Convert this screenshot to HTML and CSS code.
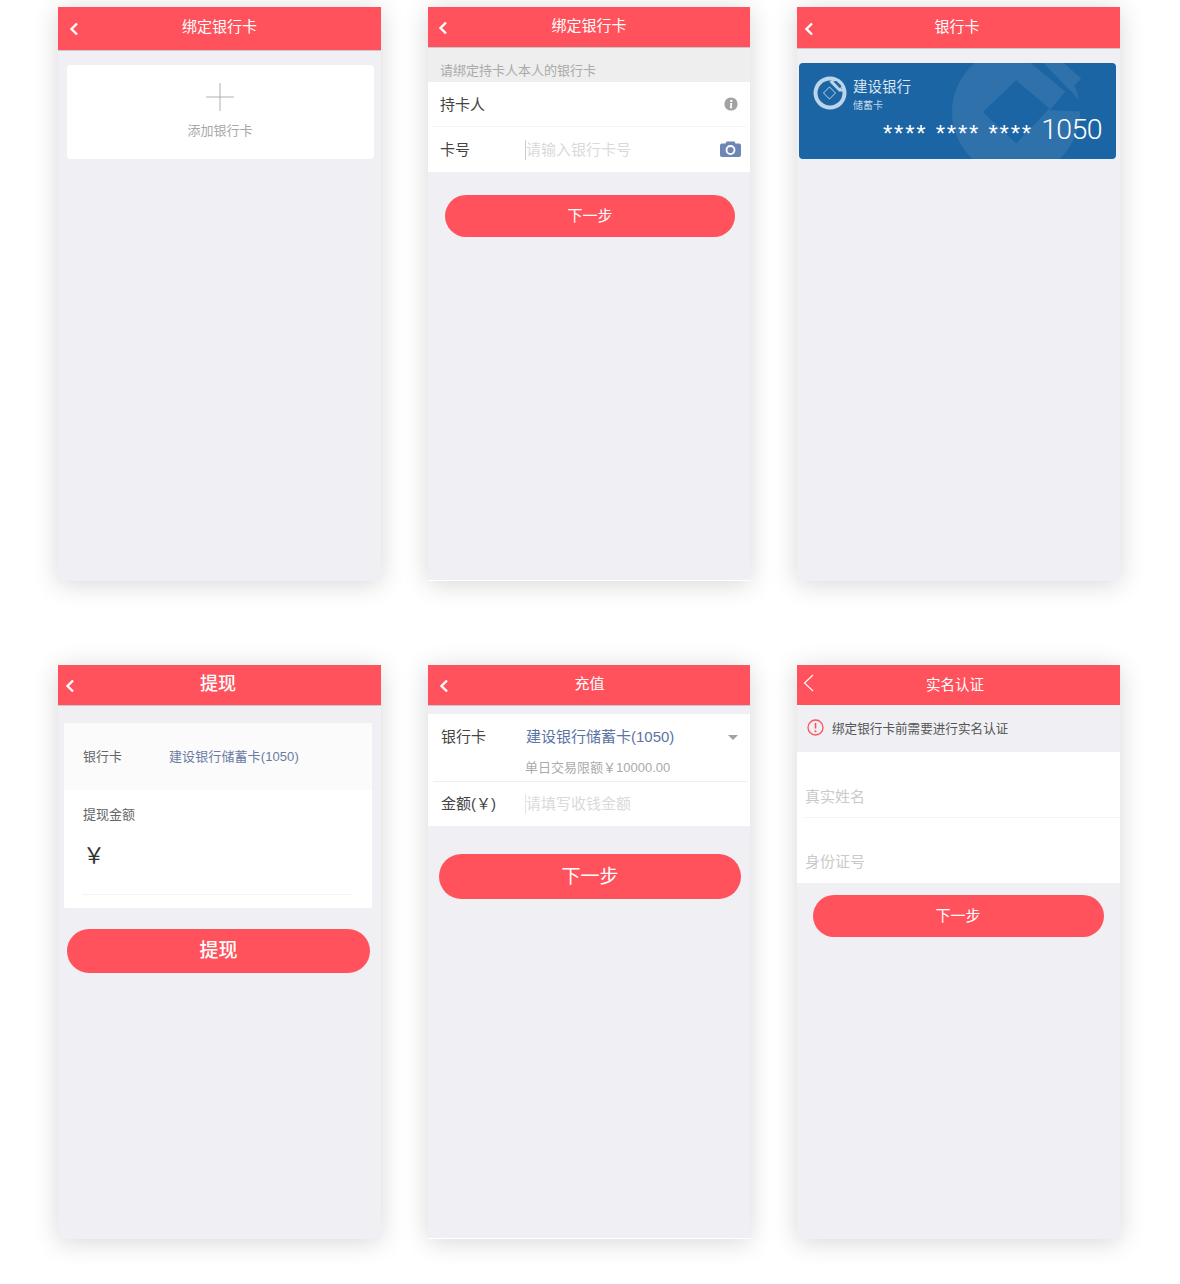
FILE: index.html
```html
<!DOCTYPE html>
<html lang="zh-CN">
<head>
<meta charset="utf-8">
<title>银行卡</title>
<link rel="stylesheet" href="styles.css">
</head>
<body>
<main class="sheet">

<section class="phone">
  <header class="bar bar-43"><svg class="back" viewBox="0 0 10 14"><path d="M8 1.500 2.500 7 8 12.500"/></svg><h1 class="title">绑定银行卡</h1></header>
  <div class="add-card">
    <svg class="plus" viewBox="0 0 28 28"><path d="M0 14h28M14 0v28"/></svg>
    <div class="add-label">添加银行卡</div>
  </div>
</section>

<section class="phone phone-line">
  <header class="bar bar-40"><svg class="back back-b" viewBox="0 0 10 14"><path d="M8 1.500 2.500 7 8 12.500"/></svg><h1 class="title">绑定银行卡</h1></header>
  <div class="hint">请绑定持卡人本人的银行卡</div>
  <div class="form">
    <div class="row row-sep">
      <span class="label">持卡人</span>
      <svg class="info" viewBox="0 0 14 14"><circle cx="7" cy="7" r="6.600" fill="#a2a2a2"/><circle cx="7.300" cy="3.900" r="1.200" fill="#fff"/><path d="M6 6h2.200l-.5 4.600h.7v.6H5.900l.5-4.600H6z" fill="#fff"/></svg>
    </div>
    <div class="row">
      <span class="label">卡号</span>
      <span class="caret"></span><span class="placeholder">请输入银行卡号</span>
      <svg class="camera" viewBox="0 0 21 16"><path d="M2 2.500h3.500L6.500.5h8l1 2H19a2 2 0 0 1 2 2V14a2 2 0 0 1-2 2H2a2 2 0 0 1-2-2V4.500a2 2 0 0 1 2-2z" fill="#6e86b6"/><circle cx="10.500" cy="9" r="4" fill="none" stroke="#fff" stroke-width="1.800"/></svg>
    </div>
  </div>
  <button class="btn btn-a" type="button">下一步</button>
</section>

<section class="phone">
  <header class="bar bar-42"><svg class="back back-c" viewBox="0 0 10 14"><path d="M8 1.500 2.500 7 8 12.500"/></svg><h1 class="title title-c">银行卡</h1></header>
  <div class="bank-card">
    <svg class="watermark" viewBox="0 0 317 96" aria-hidden="true">
      <circle cx="217" cy="49" r="64" fill="#2f71ab"/>
      <path d="M230.500-1h13.300l27.400 28.200 19.300 21.600-40-1.600 16-18.400z" fill="#1b65a5"/>
      <path d="M243.800-1h20l18.400 16.500-11.700 11.700z" fill="#2f71ab"/>
      <path d="M183.800 49l33.400-31.800 33.300 28.300-33.300 35z" fill="#1b65a5"/>
    </svg>
    <div class="bank-top">
      <svg class="bank-logo" viewBox="0 0 34 34">
        <circle cx="17" cy="17" r="16.500" fill="#bcd5e8"/>
        <circle cx="17" cy="17" r="12.500" fill="#1b65a5"/>
        <path d="M18 7.500 26 15.500 31 15.500 27 11 19.500 4 16.500 5.500z" fill="#bcd5e8"/>
        <path d="M20.500 5.500 23.500 5 28.500 10 26.500 12z" fill="#1b65a5"/>
        <path d="M16.500 10.500 23 17 16.500 23.500 10 17z" fill="#bcd5e8"/>
        <path d="M16.500 11.500 22 17 16.500 22.500 11 17z" fill="#1b65a5"/>
      </svg>
      <div class="bank-name">
        <div class="bank-title">建设银行</div>
        <div class="bank-type">储蓄卡</div>
      </div>
    </div>
    <div class="bank-num"><span class="stars">****</span><span class="stars">****</span><span class="stars">****</span><span class="last4">1050</span></div>
  </div>
</section>

<section class="phone">
  <header class="bar bar-41"><svg class="back back-d" viewBox="0 0 10 14"><path d="M8 1.500 2.500 7 8 12.500"/></svg><h1 class="title title-lg">提现</h1></header>
  <div class="withdraw">
    <div class="w-top"><span class="w-label">银行卡</span><span class="w-value">建设银行储蓄卡(1050)</span></div>
    <div class="w-body">
      <div class="w-amount">提现金额</div>
      <div class="w-yen">￥</div>
      <div class="w-line"></div>
    </div>
  </div>
  <button class="btn btn-d" type="button">提现</button>
</section>

<section class="phone phone-line">
  <header class="bar bar-41"><svg class="back" viewBox="0 0 10 14"><path d="M8 1.500 2.500 7 8 12.500"/></svg><h1 class="title title-e">充值</h1></header>
  <div class="recharge">
    <div class="r-bank">
      <div class="r-main"><span class="label r-label">银行卡</span><span class="r-value">建设银行储蓄卡(1050)</span><span class="r-arrow"></span></div>
      <div class="r-limit">单日交易限额￥10000.00</div>
    </div>
    <div class="r-amount"><span class="label r-label">金额(￥)</span><span class="caret caret-r"></span><span class="placeholder">请填写收钱金额</span></div>
  </div>
  <button class="btn btn-e" type="button">下一步</button>
</section>

<section class="phone">
  <header class="bar bar-40 bar-plain"><svg class="back-thin" viewBox="0 0 11 18"><path d="M10 1 1.500 9 10 17"/></svg><h1 class="title title-f">实名认证</h1></header>
  <div class="notice">
    <svg class="alert" viewBox="0 0 17 17"><circle cx="8.500" cy="8.500" r="7.500" fill="none" stroke="#ff525c" stroke-width="1.300"/><path d="M8.500 4v5.500" stroke="#ff525c" stroke-width="1.600"/><circle cx="8.500" cy="12.200" r="1" fill="#ff525c"/></svg>
    <span>绑定银行卡前需要进行实名认证</span>
  </div>
  <div class="id-form">
    <div class="id-row id-first">真实姓名</div>
    <div class="id-row id-second">身份证号</div>
  </div>
  <button class="btn btn-f" type="button">下一步</button>
</section>

</main>
</body>
</html>
```

FILE: styles.css
```css
* { box-sizing: border-box; }
html, body { margin: 0; padding: 0; background: #fff; }
body { font-family: "Liberation Sans", "Noto Sans CJK SC", sans-serif; width: 1180px; height: 1284px; overflow: hidden; }

.sheet {
  display: grid;
  grid-template-columns: 323px 322px 323px;
  grid-template-rows: 574px 574px;
  column-gap: 47px;
  row-gap: 84px;
  padding: 7px 0 0 58px;
}
.phone {
  display: flex;
  flex-direction: column;
  background: #efeff4;
  box-shadow: 0 3px 24px rgba(0, 0, 0, .16);
  overflow: hidden;
}
.phone-line { border-bottom: 1px solid #fff; }

.bar {
  flex: none;
  display: grid;
  grid-template-columns: 1fr auto 1fr;
  align-items: center;
  background: #ff525c;
  color: #fff;
  border-bottom: 1px solid #c9c9cd;
  padding-bottom: 3px;
}
.bar-40 { height: 41px; }
.bar-41 { height: 41px; }
.bar-42 { height: 42px; padding-bottom: 1px; }
.bar-43 { height: 44px; }
.bar-plain { height: 40px; border-bottom: 0; padding-bottom: 1px; }
.title { grid-column: 2; margin: 0; font-size: 15px; font-weight: 400; line-height: 24px; }
.title-lg { font-size: 18px; font-weight: 500; margin-left: -3px; }
.title-c { margin-left: -3px; }
.title-e { margin-left: 1px; }
.title-f { margin-left: -7px; font-size: 14.500px; }

.back { grid-column: 1; grid-row: 1; width: 10px; height: 14px; margin: 4px 0 0 11px; }
.back path { fill: none; stroke: #fff; stroke-width: 2.400; }
.back-b { margin-left: 10px; }
.back-c { margin-left: 7px; }
.back-d { margin-left: 7px; }
.back-thin { grid-column: 1; grid-row: 1; width: 11px; height: 18px; margin: -4px 0 0 6px; }
.back-thin path { fill: none; stroke: #fff; stroke-width: 1.100; }

/* screen 1 */
.add-card {
  margin: 14px 7.500px 0 8.500px;
  height: 94px;
  background: #fff;
  border-radius: 4px;
  display: flex;
  flex-direction: column;
  align-items: center;
  padding-top: 18px;
}
.plus { width: 28px; height: 28px; }
.plus path { fill: none; stroke: #b0b0b0; stroke-width: 1; }
.add-label { margin-top: 11px; font-size: 13px; line-height: 18px; color: #a8a8a8; }

/* screen 2 */
.hint { flex: none; height: 34px; padding: 14px 0 0 12px; background: #eee; font-size: 13px; line-height: 18px; color: #aaa; }
.form { flex: none; background: #fff; }
.row { position: relative; height: 45px; display: flex; align-items: center; padding-left: 12px; }
.row-sep::after { content: ""; position: absolute; left: 5px; right: 4px; bottom: 0; height: 1px; background: #f3f3f3; }
.label { font-size: 15px; color: #444; line-height: 20px; }
.row .label { width: 85px; flex: none; }
.info { width: 14px; height: 14px; margin: -1px 12px 0 auto; }
.caret { width: 1px; height: 20px; background: #ccc; flex: none; }
.placeholder { font-size: 15px; color: #dadada; line-height: 20px; }
.camera { width: 21px; height: 16px; margin: -1px 9px 0 auto; }

.btn {
  display: block;
  flex: none;
  border: 0;
  padding: 0;
  background: #ff525c;
  color: #fff;
  font-family: inherit;
  font-size: 15px;
  text-align: center;
}
.btn-a { width: 290px; height: 42px; border-radius: 21px; margin: 23px 0 0 17px; padding-bottom: 3px; }
.btn-d { width: 303px; height: 44px; border-radius: 22px; margin: 21px 0 0 9px; padding-bottom: 6px; font-size: 19px; font-weight: 500; }
.btn-e { width: 302px; height: 45px; border-radius: 22.500px; margin: 28px 0 0 11px; padding-bottom: 4px; font-size: 19px; }
.btn-f { width: 291px; height: 42px; border-radius: 21px; margin: 12px 0 0 15.500px; padding-bottom: 4px; }

/* screen 3 */
.bank-card {
  position: relative;
  overflow: hidden;
  flex: none;
  width: 317px;
  height: 96px;
  margin: 13.500px 0 0 2px;
  border-radius: 4px;
  background: #1b65a5;
  color: #fff;
}
.watermark { position: absolute; left: 0; top: 0; width: 317px; height: 96px; }
.bank-top { position: relative; display: flex; gap: 6px; padding: 13px 0 0 14px; }
.bank-logo { width: 34px; height: 34px; flex: none; }
.bank-title { font-size: 14.500px; line-height: 20px; padding-top: 1px; height: 21px; color: #d9e6f1; }
.bank-type { font-size: 10px; line-height: 14px; margin-top: 2px; color: #c4d7e8; }
.bank-num { position: relative; display: flex; justify-content: flex-end; align-items: flex-start; height: 36px; padding-right: 14px; margin-top: -5px; }
.stars { font-family: "Liberation Sans", sans-serif; font-size: 24px; line-height: 30px; letter-spacing: 1.800px; margin: 11px 8.200px 0 0; height: 24px; }
.last4 { font-family: Roboto, sans-serif; font-weight: 300; font-size: 28.500px; line-height: 34px; margin: 5px 0 0 0; letter-spacing: -.6px; }

/* screen 4 */
.withdraw { flex: none; margin: 17px 0 0 6px; width: 308px; height: 185px; background: #fff; border-radius: 2px; overflow: hidden; }
.w-top { height: 67px; background: #fbfbfc; display: flex; align-items: center; padding: 0 0 2px 19px; font-size: 13px; }
.w-label { width: 86px; color: #666; }
.w-value { color: #6a7ba3; letter-spacing: .1px; }
.w-body { padding: 16px 19px 0 18px; }
.w-amount { font-size: 13px; line-height: 18px; color: #666; padding-left: 1px; }
.w-yen { font-size: 22px; line-height: 30px; color: #333; margin: 17px 0 0 1px; }
.w-line { height: 1px; background: #f3f3f3; margin-top: 23px; }

/* screen 5 */
.recharge { flex: none; margin-top: 8px; background: #fff; height: 112px; }
.r-bank { height: 68px; margin: 0 3px 0 5px; border-bottom: 1px solid #eee; padding: 13px 0 0 8px; }
.r-main { display: flex; align-items: center; height: 20px; }
.r-label { width: 85px; flex: none; }
.r-value { font-size: 15px; line-height: 20px; color: #5c74a4; }
.r-arrow { margin-left: auto; margin-right: 9px; width: 0; height: 0; border-left: 5.500px solid transparent; border-right: 5.500px solid transparent; border-top: 5.500px solid #a2a2a2; }
.r-limit { margin: 11px 0 0 84px; font-size: 13px; line-height: 20px; color: #aaa; }
.r-amount { display: flex; align-items: center; height: 44px; padding-left: 13px; }
.r-amount .label { width: 84px; }
.caret-r { background: #e4e4e4; }

/* screen 6 */
.notice { flex: none; height: 47px; display: flex; align-items: center; padding: 0 0 2px 10px; gap: 8px; font-size: 12.600px; color: #555; }
.alert { width: 17px; height: 17px; flex: none; }
.id-form { flex: none; height: 131px; background: #fff; padding-left: 8px; }
.id-row { font-size: 15px; color: #cacaca; line-height: 20px; }
.id-first { height: 66px; padding-top: 35px; border-bottom: 1px solid #f3f3f3; }
.id-second { padding-top: 34px; }
```
